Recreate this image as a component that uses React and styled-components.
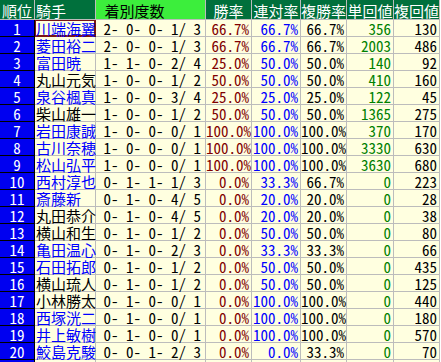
import React from "react";
import styled, { createGlobalStyle, css } from "styled-components";

const Global = createGlobalStyle`
  html, body { margin: 0; padding: 0; background: #ffffff; }
  body { width: 441px; height: 362px; overflow: hidden; }
`;

const COLS = "35px 61px 110px 46px 49px 46px 47px 46px";
const FONT = `"Noto Sans Mono CJK JP", "Noto Sans CJK JP", monospace`;

const Sheet = styled.div`
  width: 441px;
  height: 362px;
  overflow: hidden;
  font-family: ${FONT};
  font-size: 15px;
`;

const Row = styled.div`
  display: grid;
  grid-template-columns: ${COLS};
  height: ${(p) => (p.$head ? 20 : 17)}px;
`;

const Cell = styled.div`
  box-sizing: border-box;
  border-right: 1px solid #bcbcbc;
  border-bottom: 1px solid #bcbcbc;
  background: #ffffe0;
  color: ${(p) => p.$color || "#000000"};
  text-align: ${(p) => p.$align || "right"};
  padding: 1px 2px 0 0;
  line-height: 15px;
  white-space: pre;
`;

const HeadCell = styled(Cell)`
  background: ${(p) => (p.$bright ? "#3cee3c" : "#00703c")};
  color: ${(p) => (p.$bright ? "#000000" : "#ffffff")};
  text-align: ${(p) => p.$align || "center"};
  padding: 2px 0 0 ${(p) => (p.$align === "left" ? "1px" : "0")};
  line-height: 17px;
`;

const RankCell = styled(Cell)`
  background: #0000f0;
  color: #ffffff;
  text-align: center;
  border-right-color: #000000;
  border-bottom-color: #000000;
  padding: 1px 0 0 0;
`;

const NameCell = styled(Cell)`
  text-align: left;
  color: ${(p) => (p.$link ? "#0000ff" : "#000000")};
  padding: 1px 0 0 1px;
  ${(p) =>
    p.$selected &&
    css`
      border-right-color: #7a1414;
      border-bottom-color: #7a1414;
      box-shadow: inset 0 0 0 1px #7a1414;
    `}
`;

const rows = [
  ["川端海翼", 1, "2- 0- 0- 1/ 3", "66.7%", "66.7%", "66.7%", "356", "130"],
  ["菱田裕二", 1, "2- 0- 0- 1/ 3", "66.7%", "66.7%", "66.7%", "2003", "486"],
  ["富田暁", 1, "1- 1- 0- 2/ 4", "25.0%", "50.0%", "50.0%", "140", "92"],
  ["丸山元気", 0, "1- 0- 0- 1/ 2", "50.0%", "50.0%", "50.0%", "410", "160"],
  ["泉谷楓真", 1, "1- 0- 0- 3/ 4", "25.0%", "25.0%", "25.0%", "122", "45"],
  ["柴山雄一", 0, "1- 0- 0- 1/ 2", "50.0%", "50.0%", "50.0%", "1365", "275"],
  ["岩田康誠", 1, "1- 0- 0- 0/ 1", "100.0%", "100.0%", "100.0%", "370", "170"],
  ["古川奈穂", 1, "1- 0- 0- 0/ 1", "100.0%", "100.0%", "100.0%", "3330", "630"],
  ["松山弘平", 1, "1- 0- 0- 0/ 1", "100.0%", "100.0%", "100.0%", "3630", "680"],
  ["西村淳也", 1, "0- 1- 1- 1/ 3", "0.0%", "33.3%", "66.7%", "0", "223"],
  ["斎藤新", 1, "0- 1- 0- 4/ 5", "0.0%", "20.0%", "20.0%", "0", "28"],
  ["丸田恭介", 0, "0- 1- 0- 4/ 5", "0.0%", "20.0%", "20.0%", "0", "38"],
  ["横山和生", 0, "0- 1- 0- 1/ 2", "0.0%", "50.0%", "50.0%", "0", "80"],
  ["亀田温心", 1, "0- 1- 0- 2/ 3", "0.0%", "33.3%", "33.3%", "0", "66"],
  ["石田拓郎", 1, "0- 1- 0- 1/ 2", "0.0%", "50.0%", "50.0%", "0", "435"],
  ["横山琉人", 0, "0- 1- 0- 1/ 2", "0.0%", "50.0%", "50.0%", "0", "125"],
  ["小林勝太", 0, "0- 1- 0- 0/ 1", "0.0%", "100.0%", "100.0%", "0", "440"],
  ["西塚洸二", 1, "0- 1- 0- 0/ 1", "0.0%", "100.0%", "100.0%", "0", "180"],
  ["井上敏樹", 1, "0- 1- 0- 0/ 1", "0.0%", "100.0%", "100.0%", "0", "570"],
  ["鮫島克駿", 1, "0- 0- 1- 2/ 3", "0.0%", "0.0%", "33.3%", "0", "70"],
];

export default function App() {
  return (
    <Sheet>
      <Global />
      <Row $head>
        <HeadCell>順位</HeadCell>
        <HeadCell $align="left">騎手</HeadCell>
        <HeadCell $bright $align="left">{" 着別度数"}</HeadCell>
        <HeadCell>勝率</HeadCell>
        <HeadCell>連対率</HeadCell>
        <HeadCell>複勝率</HeadCell>
        <HeadCell>単回値</HeadCell>
        <HeadCell>複回値</HeadCell>
      </Row>
      {rows.map((r, i) => (
        <Row key={i}>
          <RankCell>{i + 1}</RankCell>
          <NameCell $link={r[1] === 1} $selected={i === 0}>
            {r[0]}
          </NameCell>
          <Cell $align="left">{" " + r[2]}</Cell>
          <Cell $color="#800000">{r[3]}</Cell>
          <Cell $color="#0000ff">{r[4]}</Cell>
          <Cell>{r[5]}</Cell>
          <Cell $color="#008000">{r[6]}</Cell>
          <Cell>{r[7]}</Cell>
        </Row>
      ))}
      <Row>
        <RankCell />
        <NameCell />
        <Cell />
        <Cell />
        <Cell />
        <Cell />
        <Cell />
        <Cell />
      </Row>
    </Sheet>
  );
}
